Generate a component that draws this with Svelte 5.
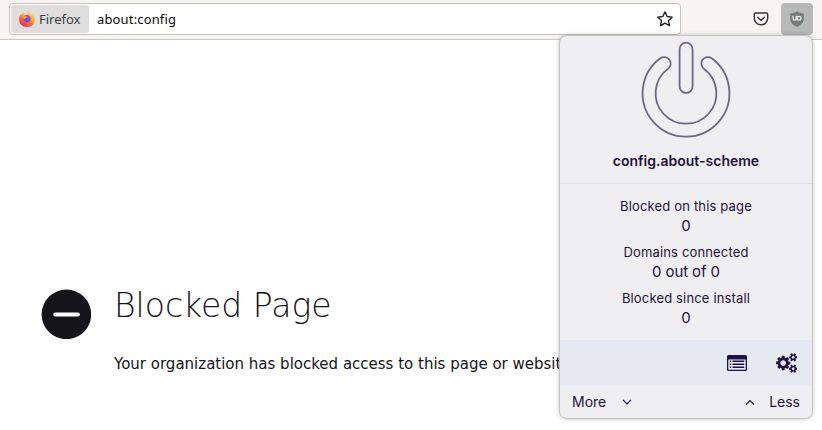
<script>
  const stats = [
    { label: 'Blocked on this page', value: '0' },
    { label: 'Domains connected', value: '0 out of 0' },
    { label: 'Blocked since install', value: '0' }
  ];
</script>

<div class="window">
  <header class="toolbar">
    <div class="urlbar">
      <div class="identity">
        <svg width="16" height="16" viewBox="0 0 16 16">
          <defs>
            <linearGradient id="flame" x1="0.8" y1="0.05" x2="0.25" y2="0.95">
              <stop offset="0" stop-color="#fff04d" />
              <stop offset="0.35" stop-color="#ffb02a" />
              <stop offset="0.65" stop-color="#ff6535" />
              <stop offset="1" stop-color="#f02465" />
            </linearGradient>
            <linearGradient id="globe" x1="0.7" y1="0" x2="0.3" y2="1">
              <stop offset="0" stop-color="#b045e8" />
              <stop offset="1" stop-color="#5a50df" />
            </linearGradient>
          </defs>
          <path fill="url(#flame)" d="M9.2.1c2.1 1.2 2.9 2.6 3.2 3.5 .8.1 1.5.4 1.8.8C15.5 5.8 16 7.4 15.9 9c-.2 4-3.6 7-7.8 7C3.5 16 .1 12.7.1 8.500c0-2.300.8-4.200 1.900-5.500l.3 1.200C2.900 3 3.600 2.100 4.300 1.600c0 .9.3 1.800 1 2.400 1 .1 1.900.1 2.500.3C8.300 3 8.300 1.500 9.200.1z" />
          <circle cx="7.900" cy="7.600" r="3.600" fill="url(#globe)" />
          <path fill="#ff9a28" d="M2.800 4.500c1.500-.7 3.100-.3 4.300.8L8.500 6c-.2.7-1.400.8-1.700 1.100-.3.300-.1.700-.9.800-1.700-.3-2.900-1.600-3.100-3.400z" />
        </svg>
        <span>Firefox</span>
      </div>
      <span class="address">about:config</span>
      <svg class="star" width="16" height="16" viewBox="0 0 16 16" fill="none" stroke="#222226" stroke-width="1.400" stroke-linejoin="round">
        <path d="M8 .9l2.150 4.600 5 .65-3.650 3.450.95 5L8 12.150 3.550 14.600l.95-5L.85 6.150l5-.65z" />
      </svg>
    </div>
    <svg class="pocket" width="16" height="16" viewBox="0 0 16 16" fill="none" stroke="#36363b" stroke-width="1.400" stroke-linecap="round" stroke-linejoin="round">
      <path d="M2.600 2h10.800c.8 0 1.300.5 1.300 1.300V7.300a6.700 6.500 0 0 1-13.400 0V3.300C1.300 2.500 1.800 2 2.600 2z" />
      <path d="M4.700 6.300L8 9.400l3.300-3.100" />
    </svg>
    <div class="extension">
      <svg width="16" height="16" viewBox="0 0 16 16">
        <path fill="#77797a" d="M8 .2c2 1.500 4.200 2.100 6.800 2.200v5.300c0 4-3 6.300-6.800 8.100-3.800-1.800-6.800-4.100-6.800-8.100V2.400C3.800 2.300 6 1.700 8 .2z" />
        <g fill="none" stroke="#f0f1f1" stroke-width="1.200">
          <path d="M4.100 4.700v2.900a1.600 1.600 0 0 0 3.200 0V4.700M7.900 4.700v4.500" />
          <circle cx="10.100" cy="7.200" r="1.900" />
        </g>
      </svg>
    </div>
  </header>

  <main class="page">
    <svg class="blocked-icon" width="50" height="50" viewBox="0 0 50 50">
      <circle cx="25.400" cy="25.400" r="24.800" fill="#15141a" />
      <path d="M14.300 25.400h22.600" stroke="#fff" stroke-width="4" stroke-linecap="round" />
    </svg>
    <div class="message">
      <h1>Blocked Page</h1>
      <p>Your organization has blocked access to this page or website.</p>
    </div>
  </main>

  <aside class="popup">
    <section class="power">
      <svg width="96" height="102" viewBox="638 38 96 102" fill="none" stroke="#6e6684" stroke-width="1.800">
        <path d="M660.300 58.300A43.400 43.400 0 1 0 711.700 58.300A6.500 6.500 0 0 0 704.100 68.900A30.400 30.400 0 1 1 667.900 68.900A6.500 6.500 0 0 0 660.300 58.300Z" />
        <rect x="679.600" y="42.700" width="13" height="50.200" rx="6.500" />
      </svg>
      <div class="host">config.about-scheme</div>
    </section>
    <section class="stats">
      {#each stats as stat}
        <div class="stat">
          <span class="label">{stat.label}</span>
          <span class="value">{stat.value}</span>
        </div>
      {/each}
    </section>
    <nav class="tools">
      <svg width="20" height="16" viewBox="0 0 20 16">
        <path fill="#1f1242" fill-rule="evenodd" d="M1.500 0h17A1.500 1.500 0 0 1 20 1.500v13a1.500 1.500 0 0 1-1.500 1.500h-17A1.500 1.500 0 0 1 0 14.500v-13A1.500 1.500 0 0 1 1.500 0zM1.300 4.500v9.700q0 .5.5.5h16.400q.5 0 .5-.5V4.500z" />
        <path stroke="#1f1242" stroke-width="1.400" d="M2.800 6.300h1.400M5.500 6.300h11.700M2.800 9.300h1.400M5.500 9.300h11.700M2.800 12.300h1.400M5.500 12.300h11.700" />
      </svg>
      <svg width="21.500" height="20" viewBox="0 0 1920 1792">
        <path fill="#1f1242" d="M896 896q0-106-75-181t-181-75-181 75-75 181 75 181 181 75 181-75 75-181zm768 512q0-52-38-90t-90-38-90 38-38 90q0 53 37.500 90.500t90.500 37.500 90.500-37.500 37.500-90.500zm0-1024q0-52-38-90t-90-38-90 38-38 90q0 53 37.500 90.500t90.500 37.500 90.500-37.500 37.500-90.500zm-384 421v185q0 10-7 19.500t-16 10.500l-155 24q-11 35-32 76 34 48 90 115 7 11 7 20 0 12-7 19-23 30-82.500 89.500t-78.500 59.500q-11 0-21-7l-115-90q-37 19-77 31-11 108-23 155-7 24-30 24h-186q-11 0-20-7.500t-10-17.500l-23-153q-34-10-75-31l-118 89q-7 7-20 7-11 0-21-8-144-133-144-160 0-9 7-19 10-14 41-53t47-61q-23-44-35-82l-152-24q-10-1-17-9.500t-7-19.500v-185q0-10 7-19.500t16-10.500l155-24q11-35 32-76-34-48-90-115-7-11-7-20 0-12 7-20 22-30 82-89t79-59q11 0 21 7l115 90q34-18 77-32 11-108 23-154 7-24 30-24h186q11 0 20 7.500t10 17.500l23 153q34 10 75 31l118-89q8-7 20-7 11 0 21 8 144 133 144 160 0 8-7 19-12 16-42 54t-45 60q23 48 34 82l152 23q10 2 17 10.500t7 19.500zm640 533v140q0 16-149 31-12 27-30 52 51 113 51 138 0 4-4 7-122 71-124 71-8 0-46-47t-52-68q-20 2-30 2t-30-2q-14 21-52 68t-46 47q-2 0-124-71-4-3-4-7 0-25 51-138-18-25-30-52-149-15-149-31v-140q0-16 149-31 13-29 30-52-51-113-51-138 0-4 4-7 4-2 35-20t59-34 30-16q8 0 46 46.500t52 67.500q20-2 30-2t30 2q51-71 92-112l6-2q4 0 124 70 4 3 4 7 0 25-51 138 17 23 30 52 149 15 149 31zm0-1024v140q0 16-149 31-12 27-30 52 51 113 51 138 0 4-4 7-122 71-124 71-8 0-46-47t-52-68q-20 2-30 2t-30-2q-14 21-52 68t-46 47q-2 0-124-71-4-3-4-7 0-25 51-138-18-25-30-52-149-15-149-31v-140q0-16 149-31 13-29 30-52-51-113-51-138 0-4 4-7 4-2 35-20t59-34 30-16q8 0 46 46.500t52 67.500q20-2 30-2t30 2q51-71 92-112l6-2q4 0 124 70 4 3 4 7 0 25-51 138 17 23 30 52 149 15 149 31z" />
      </svg>
    </nav>
    <footer class="toggles">
      <span>More</span>
      <svg width="10" height="6" viewBox="0 0 10 6" fill="none" stroke="#1f1242" stroke-width="1.300"><path d="M1 .9L5 4.900 9 .9" /></svg>
      <svg class="up" width="10" height="6" viewBox="0 0 10 6" fill="none" stroke="#1f1242" stroke-width="1.300"><path d="M1 5.600L5 1.600l4 4" /></svg>
      <span>Less</span>
    </footer>
  </aside>
</div>

<style>
  :global(body) { margin: 0; background: #fff; }
  .window { position: relative; width: 822px; height: 430px; overflow: hidden; background: #fff; }
  .toolbar {
    box-sizing: border-box; height: 40px; display: flex; align-items: flex-start;
    padding: 3px 9px 0; background: #f6f5f4; border-bottom: 1px solid #cbc6c1;
    font-family: "Noto Sans", sans-serif; font-size: 13px;
  }
  .urlbar {
    box-sizing: border-box; width: 672px; height: 32px; display: flex; align-items: center;
    padding: 0 7px 0 1px; background: #fff; border: 1px solid #c8c2bc; border-radius: 4px;
  }
  .identity {
    box-sizing: border-box; width: 78px; height: 28px; display: flex; align-items: center; gap: 4px;
    padding-left: 8px; background: #dedede; border-radius: 3px; color: #3c3c3f;
  }
  .address { margin-left: 8px; color: #0c0c0d; letter-spacing: 0.15px; }
  .star { margin-left: auto; }
  .pocket { margin: 8px 0 0 72px; }
  .extension {
    width: 32px; height: 32px; margin-left: 12px; display: flex; align-items: center;
    justify-content: center; background: #b6b9b8; border-radius: 4px;
  }
  .page { display: flex; padding: 249px 0 0 41px; color: #15141a; font-family: "DejaVu Sans", sans-serif; }
  .message { margin: -4px 0 0 23px; white-space: nowrap; }
  h1 { margin: 0; font-size: 33px; font-weight: 200; line-height: 42px; }
  p { margin: 26px 0 0; font-size: 15px; line-height: 22px; }
  .popup {
    position: absolute; left: 559px; top: 35px; box-sizing: border-box; width: 254px; height: 384px;
    display: flex; flex-direction: column; overflow: hidden; background: #efeff1;
    border: 1px solid #c8c3bd; border-radius: 8px; box-shadow: 0 0 4px rgba(0, 0, 0, 0.23);
    color: #1f1242; font-family: Inter, sans-serif;
  }
  .power {
    box-sizing: border-box; height: 148px; display: flex; flex-direction: column; align-items: center;
    padding-top: 2px; border-bottom: 1px solid #dedee2;
  }
  .host { margin-top: 11px; font-size: 14px; font-weight: 600; line-height: 20px; }
  .stats { box-sizing: border-box; height: 156px; padding-top: 12px; }
  .stat { height: 46px; display: flex; flex-direction: column; align-items: center; }
  .label { font-size: 13px; line-height: 20px; letter-spacing: 0.16px; }
  .value { font-size: 15px; line-height: 19px; letter-spacing: -0.1px; }
  .tools {
    box-sizing: border-box; height: 45px; display: flex; align-items: center; justify-content: flex-end;
    gap: 29px; padding-right: 15px; background: #e6e9f2;
  }
  .toggles { flex: 1; display: flex; align-items: center; padding: 0 12px; font-size: 14px; }
  .toggles svg { margin-left: 16px; }
  .toggles .up { margin: 0 14px 0 auto; }
</style>
